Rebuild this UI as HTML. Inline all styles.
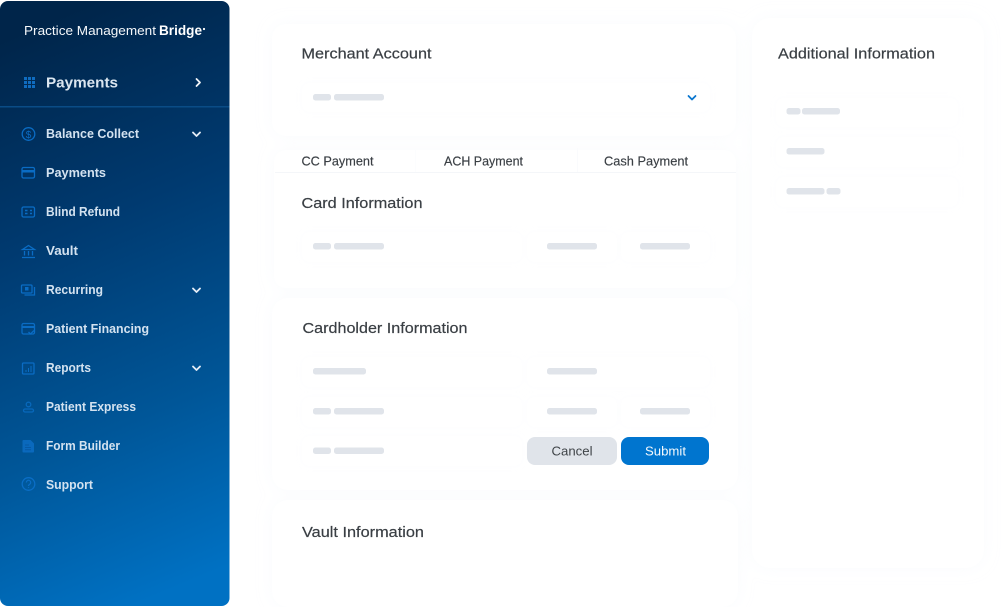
<!DOCTYPE html>
<html>
<head>
<meta charset="utf-8">
<style>
html,body{margin:0;padding:0;background:#fff;width:1008px;height:607px;overflow:hidden}
svg{display:block}
text{font-family:"Liberation Sans",sans-serif}
.m{font-size:13px;font-weight:700;fill:#d3e2f0}
.h{font-size:15px;fill:#3a3f44;stroke:#3a3f44;stroke-width:.2}
.t{font-size:12.5px;fill:#3a3f44;stroke:#3a3f44;stroke-width:.15}
.b{fill:#e0e4ea}
.i{fill:none;stroke:#0a6cc4;stroke-width:1.3}
.c{fill:none;stroke:#e4edf6;stroke-width:1.8;stroke-linecap:round;stroke-linejoin:round}
</style>
</head>
<body>
<svg width="1008" height="607" viewBox="0 0 1008 607" xmlns="http://www.w3.org/2000/svg">
<defs>
<linearGradient id="g" x1="0.42" y1="0" x2="0.58" y2="1">
<stop offset="0" stop-color="#00254a"/>
<stop offset="0.35" stop-color="#003a70"/>
<stop offset="0.7" stop-color="#005698"/>
<stop offset="1" stop-color="#0071c3"/>
</linearGradient>
<filter id="s" x="-10%" y="-20%" width="120%" height="140%"><feDropShadow dx="0" dy="0" stdDeviation="8" flood-color="#e3eaf6" flood-opacity=".2"/></filter>
<filter id="f" x="-10%" y="-30%" width="120%" height="160%"><feDropShadow dx="0" dy="0" stdDeviation="3" flood-color="#e6ecf4" flood-opacity=".14"/></filter>
</defs>
<rect width="1008" height="607" fill="#fff"/>

<!-- sidebar -->
<rect x="0" y="1" width="229.500" height="605" rx="8" fill="url(#g)"/>
<text x="24" y="35" font-size="13" fill="#f4f7fa" textLength="132" lengthAdjust="spacingAndGlyphs">Practice Management</text>
<text x="159" y="35" font-size="13.500" font-weight="700" fill="#fff" textLength="43" lengthAdjust="spacingAndGlyphs">Bridge</text>
<circle cx="204" cy="29" r="1.100" fill="#fff"/>
<g fill="#0f6cc0">
<rect x="24" y="77" width="3" height="3"/><rect x="28" y="77" width="3" height="3"/><rect x="32" y="77" width="3" height="3"/>
<rect x="24" y="81" width="3" height="3"/><rect x="28" y="81" width="3" height="3"/><rect x="32" y="81" width="3" height="3"/>
<rect x="24" y="85" width="3" height="3"/><rect x="28" y="85" width="3" height="3"/><rect x="32" y="85" width="3" height="3"/>
</g>
<text x="46" y="87.500" font-size="15" font-weight="700" fill="#dbe6f0" textLength="72" lengthAdjust="spacingAndGlyphs">Payments</text>
<path d="M196.500 79l3.500 3.500-3.500 3.500" class="c" style="stroke:#f0f4f8"/>
<rect x="0" y="106" width="229.500" height="1.500" fill="#0a4c86"/>

<text class="m" x="46" y="138" textLength="93" lengthAdjust="spacingAndGlyphs">Balance Collect</text>
<text class="m" x="46" y="177" textLength="60" lengthAdjust="spacingAndGlyphs">Payments</text>
<text class="m" x="46" y="216" textLength="74" lengthAdjust="spacingAndGlyphs">Blind Refund</text>
<text class="m" x="46" y="255" textLength="32" lengthAdjust="spacingAndGlyphs">Vault</text>
<text class="m" x="46" y="294" textLength="57" lengthAdjust="spacingAndGlyphs">Recurring</text>
<text class="m" x="46" y="333" textLength="103" lengthAdjust="spacingAndGlyphs">Patient Financing</text>
<text class="m" x="46" y="372" textLength="45" lengthAdjust="spacingAndGlyphs">Reports</text>
<text class="m" x="46" y="411" textLength="90" lengthAdjust="spacingAndGlyphs">Patient Express</text>
<text class="m" x="46" y="450" textLength="74" lengthAdjust="spacingAndGlyphs">Form Builder</text>
<text class="m" x="46" y="489" textLength="47" lengthAdjust="spacingAndGlyphs">Support</text>

<path d="M193 132.500l3.500 3.500 3.500-3.500M193 288.500l3.500 3.500 3.500-3.500M193 366.500l3.500 3.500 3.500-3.500" class="c"/>

<!-- icons -->
<circle cx="28.500" cy="134" r="6.300" class="i"/>
<text x="28.500" y="138" font-size="10" text-anchor="middle" fill="#0a6cc4">$</text>
<rect x="22" y="167.500" width="12.500" height="10.500" rx="1.500" class="i"/><rect x="22" y="170" width="12.500" height="2.500" fill="#0a6cc4"/>
<rect x="22" y="207" width="12.500" height="10" rx="1.500" class="i"/>
<path d="M25 210.500h2.500M25 213.500h2.500M30 210.500h2M30 213.500h2" stroke="#0a6cc4" stroke-width="1.500" fill="none"/>
<path d="M22.500 249.500l6-4 6 4zM24.500 251v4.500M28.500 251v4.500M32.500 251v4.500M22 257.500h13" class="i"/>
<rect x="21.500" y="285" width="10.500" height="8" rx="1" class="i"/><rect x="25" y="287" width="3.500" height="3.500" fill="#0a6cc4"/>
<path d="M34.500 287v8h-10" class="i"/>
<rect x="22" y="323.500" width="12.500" height="10.500" rx="1.500" class="i"/><rect x="22" y="326" width="12.500" height="2" fill="#0a6cc4"/>
<path d="M28.500 332l2 2 3.500-3.500" class="i"/>
<rect x="22.500" y="363" width="11.500" height="11" rx="1" class="i"/>
<path d="M26 372v-2M28.500 372v-4M31 372v-6" stroke="#0a6cc4" fill="none"/>
<circle cx="28.500" cy="404.500" r="2.300" class="i" style="stroke:#0868bb"/>
<rect x="23.500" y="409" width="10" height="3" rx="1.500" class="i" style="stroke:#0868bb"/>
<path d="M22.500 441a1 1 0 0 1 1-1h7l3.500 3.500v8a1 1 0 0 1-1 1h-9.500a1 1 0 0 1-1-1z" fill="#0a69bd"/>
<path d="M25 445h4M25 447.500h6M25 449.800h6" stroke="#0659a5" fill="none"/>
<circle cx="28.500" cy="484" r="6.300" class="i" style="stroke:#0a6ec6"/>
<path d="M26.300 482.500a2.200 2.200 0 1 1 3.400 1.800c-.8.5-1.200 1-1.200 1.700M28.500 487.200v.8" fill="none" stroke="#0a6ec6" stroke-width="1.200"/>

<!-- cards -->
<g fill="#fff" filter="url(#s)">
<rect x="272" y="24" width="464" height="112" rx="14"/>
<rect x="752" y="18" width="232" height="550" rx="18"/>
<rect x="274" y="150" width="462" height="138" rx="12"/>
<rect x="272" y="298" width="466" height="192" rx="16"/>
<rect x="272" y="500" width="466" height="107" rx="16"/>
</g>

<!-- inputs -->
<g fill="#fff" filter="url(#f)">
<rect x="302" y="83" width="408" height="29" rx="8"/>
<rect x="302" y="232" width="220" height="30" rx="8"/>
<rect x="527" y="232" width="90" height="30" rx="8"/>
<rect x="621" y="232" width="89" height="30" rx="8"/>
<rect x="302" y="357" width="220" height="30" rx="8"/>
<rect x="527" y="357" width="183" height="30" rx="8"/>
<rect x="302" y="397" width="220" height="30" rx="8"/>
<rect x="527" y="397" width="90" height="30" rx="8"/>
<rect x="621" y="397" width="89" height="30" rx="8"/>
<rect x="302" y="436" width="220" height="30" rx="8"/>
<rect x="776" y="98" width="182" height="29" rx="8"/>
<rect x="776" y="137" width="182" height="30" rx="8"/>
<rect x="776" y="177" width="182" height="30" rx="8"/>
</g>

<!-- headings -->
<text class="h" x="301.500" y="58.500" textLength="130" lengthAdjust="spacingAndGlyphs">Merchant Account</text>
<text class="h" x="301.500" y="208" textLength="121" lengthAdjust="spacingAndGlyphs">Card Information</text>
<text class="h" x="302.500" y="333" textLength="165" lengthAdjust="spacingAndGlyphs">Cardholder Information</text>
<text class="h" x="302" y="537" textLength="122" lengthAdjust="spacingAndGlyphs">Vault Information</text>
<text class="h" x="778" y="58.500" textLength="157" lengthAdjust="spacingAndGlyphs">Additional Information</text>

<!-- tabs -->
<rect x="415" y="148" width="1" height="24" fill="#fcfdfe"/>
<rect x="577" y="148" width="1" height="24" fill="#fafbfd"/>
<text class="t" x="301.500" y="165.500" textLength="72" lengthAdjust="spacingAndGlyphs">CC Payment</text>
<text class="t" x="444" y="165.500" textLength="79" lengthAdjust="spacingAndGlyphs">ACH Payment</text>
<text class="t" x="604" y="165.500" textLength="84" lengthAdjust="spacingAndGlyphs">Cash Payment</text>
<rect x="275" y="172" width="461" height="1" fill="#f4f6f9"/>

<!-- placeholders -->
<g class="b">
<rect x="313" y="94" width="18" height="6.500" rx="2.500"/><rect x="334" y="94" width="50" height="6.500" rx="2.500"/>
<rect x="313" y="243" width="18" height="6.500" rx="2.500"/><rect x="334" y="243" width="50" height="6.500" rx="2.500"/>
<rect x="547" y="243" width="50" height="6.500" rx="2.500"/>
<rect x="640" y="243" width="50" height="6.500" rx="2.500"/>
<rect x="313" y="368" width="53" height="6.500" rx="2.500"/>
<rect x="547" y="368" width="50" height="6.500" rx="2.500"/>
<rect x="313" y="408" width="18" height="6.500" rx="2.500"/><rect x="334" y="408" width="50" height="6.500" rx="2.500"/>
<rect x="547" y="408" width="50" height="6.500" rx="2.500"/>
<rect x="640" y="408" width="50" height="6.500" rx="2.500"/>
<rect x="313" y="447.500" width="18" height="6.500" rx="2.500"/><rect x="334" y="447.500" width="50" height="6.500" rx="2.500"/>
<rect x="786.500" y="108" width="14" height="6.500" rx="2.500"/><rect x="802" y="108" width="38" height="6.500" rx="2.500"/>
<rect x="786.500" y="148" width="38" height="6.500" rx="2.500"/>
<rect x="786.500" y="188" width="38" height="6.500" rx="2.500"/><rect x="826.500" y="188" width="14" height="6.500" rx="2.500"/>
</g>

<path d="M688.500 96l3.500 3.500 3.500-3.500" fill="none" stroke="#0b77cf" stroke-width="1.800" stroke-linecap="round" stroke-linejoin="round"/>

<!-- buttons -->
<rect x="527" y="437" width="90" height="28" rx="8" fill="#e0e4ea"/>
<text x="551.500" y="455.500" font-size="13" fill="#3f4448" textLength="41" lengthAdjust="spacingAndGlyphs">Cancel</text>
<rect x="621" y="437" width="88" height="28" rx="8" fill="#0075cf"/>
<text x="645" y="455.500" font-size="13" fill="#f4f9fd" textLength="41" lengthAdjust="spacingAndGlyphs">Submit</text>
</svg>
</body>
</html>
